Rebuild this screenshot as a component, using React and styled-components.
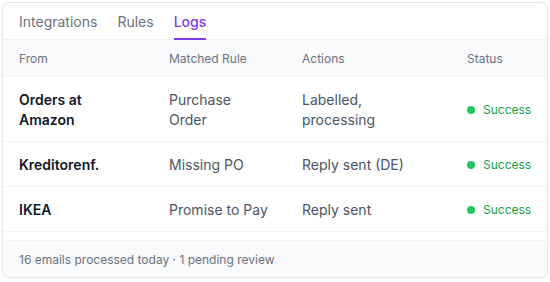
import React from "react";
import styled, { createGlobalStyle } from "styled-components";

const GlobalStyle = createGlobalStyle`
  body {
    margin: 0;
    padding: 2px;
    background: #ffffff;
    font-family: Inter, "Noto Sans", sans-serif;
    -webkit-font-smoothing: antialiased;
  }
`;

const rows = [
  { from: "Orders at Amazon", rule: "Purchase Order", action: "Labelled, processing", status: "Success" },
  { from: "Kreditorenf.", rule: "Missing PO", action: "Reply sent (DE)", status: "Success" },
  { from: "IKEA", rule: "Promise to Pay", action: "Reply sent", status: "Success" },
];

const App = () => {
  return (
    <>
      <GlobalStyle />
      <Card>
        <TabBar>
          <Tab>Integrations</Tab>
          <Tab>Rules</Tab>
          <Tab active>Logs</Tab>
        </TabBar>
        <HeadRow>
          <HeadCell>From</HeadCell>
          <HeadCell>Matched Rule</HeadCell>
          <HeadCell>Actions</HeadCell>
          <HeadCell>Status</HeadCell>
        </HeadRow>
        <Body>
          {rows.map((r) => (
            <Row key={r.from}>
              <FromCell>{r.from}</FromCell>
              <Cell>{r.rule}</Cell>
              <Cell>{r.action}</Cell>
              <StatusCell>
                <Dot />
                {r.status}
              </StatusCell>
            </Row>
          ))}
        </Body>
        <Footer>16 emails processed today · 1 pending review</Footer>
      </Card>
    </>
  );
};

const Card = styled.div`
  width: 546px;
  box-sizing: border-box;
  border: 1px solid #e5e7eb;
  border-radius: 7px;
  overflow: hidden;
  background: #ffffff;
  box-shadow: 0 1px 2px rgba(0, 0, 0, 0.04);
`;

const TabBar = styled.div`
  display: flex;
  gap: 20px;
  padding: 0 16px;
  border-bottom: 1px solid #f1f2f4;
`;

const Tab = styled.div`
  padding: 9px 0 6px;
  font-size: 14px;
  line-height: 20px;
  color: ${(p) => (p.active ? "#7c3aed" : "#6b7280")};
  font-weight: ${(p) => (p.active ? 500 : 400)};
  border-bottom: 2px solid ${(p) => (p.active ? "#7c3aed" : "transparent")};
  margin-bottom: -1px;
`;

const grid = `
  display: grid;
  grid-template-columns: 150px 133px 165px 1fr;
`;

const HeadRow = styled.div`
  ${grid}
  background: #f9fafb;
  border-bottom: 1px solid #f1f2f4;
`;

const HeadCell = styled.div`
  padding: 11px 16px 9px;
  font-size: 12px;
  line-height: 16px;
  color: #6b7280;
`;

const Body = styled.div`
  padding-bottom: 8px;
`;

const Row = styled.div`
  ${grid}
  border-bottom: 1px solid #f3f4f6;
`;

const Cell = styled.div`
  padding: 13px 16px 11px;
  font-size: 14px;
  line-height: 20px;
  color: #4b5563;
  display: flex;
  align-items: center;
`;

const FromCell = styled(Cell)`
  color: #111827;
  font-weight: 600;
`;

const StatusCell = styled(Cell)`
  font-size: 12px;
  color: #16a34a;
  gap: 8px;
`;

const Dot = styled.span`
  flex: none;
  width: 8px;
  height: 8px;
  border-radius: 50%;
  background: #22c55e;
`;

const Footer = styled.div`
  background: #f9fafb;
  border-top: 1px solid #f1f2f4;
  padding: 11px 16px 9px;
  font-size: 12px;
  line-height: 16px;
  color: #6b7280;
`;

export default App;
